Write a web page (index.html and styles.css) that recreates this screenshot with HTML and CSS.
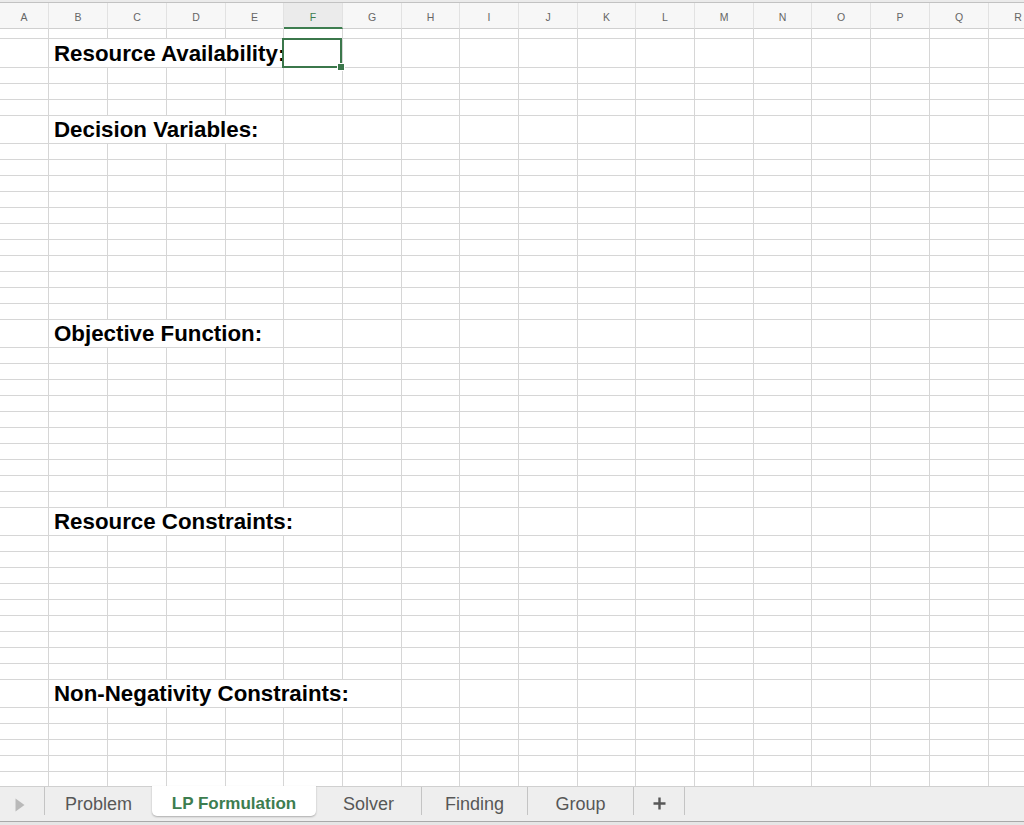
FILE: index.html
```html
<!DOCTYPE html>
<html lang="en">
<head>
<meta charset="utf-8">
<title>LP Formulation</title>
<link rel="stylesheet" href="styles.css">
</head>
<body>
<div class="app">
  <div class="topstrip"></div>
  <div class="row hdr">
    <span>A</span><span>B</span><span>C</span><span>D</span><span>E</span><span class="cur">F</span><span>G</span><span>H</span><span>I</span><span>J</span><span>K</span><span>L</span><span>M</span><span>N</span><span>O</span><span>P</span><span>Q</span><span>R</span>
  </div>
  <div class="sheet">
    <div class="row r1"><span></span><span></span><span></span><span></span><span></span><span></span><span></span><span></span><span></span><span></span><span></span><span></span><span></span><span></span><span></span><span></span><span></span><span></span></div>
    <div class="row big2"><span></span><span class="lbl s4">Resource Availability:</span><span class="selcell"><i class="sel"><i class="handle"></i></i></span><span></span><span></span><span></span><span></span><span></span><span></span><span></span><span></span><span></span><span></span><span></span><span></span></div>
    <div class="row"><span></span><span></span><span></span><span></span><span></span><span></span><span></span><span></span><span></span><span></span><span></span><span></span><span></span><span></span><span></span><span></span><span></span><span></span></div>
    <div class="row"><span></span><span></span><span></span><span></span><span></span><span></span><span></span><span></span><span></span><span></span><span></span><span></span><span></span><span></span><span></span><span></span><span></span><span></span></div>
    <div class="row"><span></span><span></span><span></span><span></span><span></span><span></span><span></span><span></span><span></span><span></span><span></span><span></span><span></span><span></span><span></span><span></span><span></span><span></span></div>
    <div class="row big"><span></span><span class="lbl s4">Decision Variables:</span><span></span><span></span><span></span><span></span><span></span><span></span><span></span><span></span><span></span><span></span><span></span><span></span><span></span></div>
    <div class="row"><span></span><span></span><span></span><span></span><span></span><span></span><span></span><span></span><span></span><span></span><span></span><span></span><span></span><span></span><span></span><span></span><span></span><span></span></div>
    <div class="row"><span></span><span></span><span></span><span></span><span></span><span></span><span></span><span></span><span></span><span></span><span></span><span></span><span></span><span></span><span></span><span></span><span></span><span></span></div>
    <div class="row"><span></span><span></span><span></span><span></span><span></span><span></span><span></span><span></span><span></span><span></span><span></span><span></span><span></span><span></span><span></span><span></span><span></span><span></span></div>
    <div class="row"><span></span><span></span><span></span><span></span><span></span><span></span><span></span><span></span><span></span><span></span><span></span><span></span><span></span><span></span><span></span><span></span><span></span><span></span></div>
    <div class="row"><span></span><span></span><span></span><span></span><span></span><span></span><span></span><span></span><span></span><span></span><span></span><span></span><span></span><span></span><span></span><span></span><span></span><span></span></div>
    <div class="row"><span></span><span></span><span></span><span></span><span></span><span></span><span></span><span></span><span></span><span></span><span></span><span></span><span></span><span></span><span></span><span></span><span></span><span></span></div>
    <div class="row"><span></span><span></span><span></span><span></span><span></span><span></span><span></span><span></span><span></span><span></span><span></span><span></span><span></span><span></span><span></span><span></span><span></span><span></span></div>
    <div class="row"><span></span><span></span><span></span><span></span><span></span><span></span><span></span><span></span><span></span><span></span><span></span><span></span><span></span><span></span><span></span><span></span><span></span><span></span></div>
    <div class="row"><span></span><span></span><span></span><span></span><span></span><span></span><span></span><span></span><span></span><span></span><span></span><span></span><span></span><span></span><span></span><span></span><span></span><span></span></div>
    <div class="row"><span></span><span></span><span></span><span></span><span></span><span></span><span></span><span></span><span></span><span></span><span></span><span></span><span></span><span></span><span></span><span></span><span></span><span></span></div>
    <div class="row"><span></span><span></span><span></span><span></span><span></span><span></span><span></span><span></span><span></span><span></span><span></span><span></span><span></span><span></span><span></span><span></span><span></span><span></span></div>
    <div class="row big"><span></span><span class="lbl s4">Objective Function:</span><span></span><span></span><span></span><span></span><span></span><span></span><span></span><span></span><span></span><span></span><span></span><span></span><span></span></div>
    <div class="row"><span></span><span></span><span></span><span></span><span></span><span></span><span></span><span></span><span></span><span></span><span></span><span></span><span></span><span></span><span></span><span></span><span></span><span></span></div>
    <div class="row"><span></span><span></span><span></span><span></span><span></span><span></span><span></span><span></span><span></span><span></span><span></span><span></span><span></span><span></span><span></span><span></span><span></span><span></span></div>
    <div class="row"><span></span><span></span><span></span><span></span><span></span><span></span><span></span><span></span><span></span><span></span><span></span><span></span><span></span><span></span><span></span><span></span><span></span><span></span></div>
    <div class="row"><span></span><span></span><span></span><span></span><span></span><span></span><span></span><span></span><span></span><span></span><span></span><span></span><span></span><span></span><span></span><span></span><span></span><span></span></div>
    <div class="row"><span></span><span></span><span></span><span></span><span></span><span></span><span></span><span></span><span></span><span></span><span></span><span></span><span></span><span></span><span></span><span></span><span></span><span></span></div>
    <div class="row"><span></span><span></span><span></span><span></span><span></span><span></span><span></span><span></span><span></span><span></span><span></span><span></span><span></span><span></span><span></span><span></span><span></span><span></span></div>
    <div class="row"><span></span><span></span><span></span><span></span><span></span><span></span><span></span><span></span><span></span><span></span><span></span><span></span><span></span><span></span><span></span><span></span><span></span><span></span></div>
    <div class="row"><span></span><span></span><span></span><span></span><span></span><span></span><span></span><span></span><span></span><span></span><span></span><span></span><span></span><span></span><span></span><span></span><span></span><span></span></div>
    <div class="row"><span></span><span></span><span></span><span></span><span></span><span></span><span></span><span></span><span></span><span></span><span></span><span></span><span></span><span></span><span></span><span></span><span></span><span></span></div>
    <div class="row"><span></span><span></span><span></span><span></span><span></span><span></span><span></span><span></span><span></span><span></span><span></span><span></span><span></span><span></span><span></span><span></span><span></span><span></span></div>
    <div class="row big"><span></span><span class="lbl s5">Resource Constraints:</span><span></span><span></span><span></span><span></span><span></span><span></span><span></span><span></span><span></span><span></span><span></span><span></span></div>
    <div class="row"><span></span><span></span><span></span><span></span><span></span><span></span><span></span><span></span><span></span><span></span><span></span><span></span><span></span><span></span><span></span><span></span><span></span><span></span></div>
    <div class="row"><span></span><span></span><span></span><span></span><span></span><span></span><span></span><span></span><span></span><span></span><span></span><span></span><span></span><span></span><span></span><span></span><span></span><span></span></div>
    <div class="row"><span></span><span></span><span></span><span></span><span></span><span></span><span></span><span></span><span></span><span></span><span></span><span></span><span></span><span></span><span></span><span></span><span></span><span></span></div>
    <div class="row"><span></span><span></span><span></span><span></span><span></span><span></span><span></span><span></span><span></span><span></span><span></span><span></span><span></span><span></span><span></span><span></span><span></span><span></span></div>
    <div class="row"><span></span><span></span><span></span><span></span><span></span><span></span><span></span><span></span><span></span><span></span><span></span><span></span><span></span><span></span><span></span><span></span><span></span><span></span></div>
    <div class="row"><span></span><span></span><span></span><span></span><span></span><span></span><span></span><span></span><span></span><span></span><span></span><span></span><span></span><span></span><span></span><span></span><span></span><span></span></div>
    <div class="row"><span></span><span></span><span></span><span></span><span></span><span></span><span></span><span></span><span></span><span></span><span></span><span></span><span></span><span></span><span></span><span></span><span></span><span></span></div>
    <div class="row"><span></span><span></span><span></span><span></span><span></span><span></span><span></span><span></span><span></span><span></span><span></span><span></span><span></span><span></span><span></span><span></span><span></span><span></span></div>
    <div class="row"><span></span><span></span><span></span><span></span><span></span><span></span><span></span><span></span><span></span><span></span><span></span><span></span><span></span><span></span><span></span><span></span><span></span><span></span></div>
    <div class="row big"><span></span><span class="lbl s6">Non-Negativity Constraints:</span><span></span><span></span><span></span><span></span><span></span><span></span><span></span><span></span><span></span><span></span><span></span></div>
    <div class="row"><span></span><span></span><span></span><span></span><span></span><span></span><span></span><span></span><span></span><span></span><span></span><span></span><span></span><span></span><span></span><span></span><span></span><span></span></div>
    <div class="row"><span></span><span></span><span></span><span></span><span></span><span></span><span></span><span></span><span></span><span></span><span></span><span></span><span></span><span></span><span></span><span></span><span></span><span></span></div>
    <div class="row"><span></span><span></span><span></span><span></span><span></span><span></span><span></span><span></span><span></span><span></span><span></span><span></span><span></span><span></span><span></span><span></span><span></span><span></span></div>
    <div class="row"><span></span><span></span><span></span><span></span><span></span><span></span><span></span><span></span><span></span><span></span><span></span><span></span><span></span><span></span><span></span><span></span><span></span><span></span></div>
    <div class="row"><span></span><span></span><span></span><span></span><span></span><span></span><span></span><span></span><span></span><span></span><span></span><span></span><span></span><span></span><span></span><span></span><span></span><span></span></div>
  </div>
  <div class="tabbar">
    <div class="nav">
      <svg width="10" height="14" viewBox="0 0 10 14"><polygon points="0.5,0.5 9.5,7 0.5,13.5" fill="#b9b9b9"/></svg>
    </div>
    <div class="tab w108 sep">Problem</div>
    <div class="tab active">LP Formulation</div>
    <div class="tab w105">Solver</div>
    <div class="tab w106 sep">Finding</div>
    <div class="tab w106 sep">Group</div>
    <div class="tab plus sep">
      <svg width="13" height="13" viewBox="0 0 13 13"><path d="M6.5 0.5V12.5M0.5 6.5H12.5" stroke="#585858" stroke-width="2.4" fill="none"/></svg>
    </div>
    <div class="tab endsep sep"></div>
  </div>
  <div class="bottomstrip"></div>
</div>
</body>
</html>
```

FILE: styles.css
```css
* { box-sizing: border-box; }

html, body {
  margin: 0;
  padding: 0;
  background: #ffffff;
}

body {
  font-family: "Liberation Sans", Arial, Helvetica, sans-serif;
  overflow: hidden;
}

.app {
  width: 1024px;
  height: 825px;
  display: flex;
  flex-direction: column;
  overflow: hidden;
}

.topstrip {
  height: 3px;
  flex: none;
  background: #ebebeb;
  border-bottom: 1px solid #c2c2c2;
}

.row {
  display: grid;
  grid-template-columns: 49px 59px 59px 59px 58px 59px 59px 58px 59px 59px 58px 59px 59px 58px 59px 59px 59px 59px;
  height: 16px;
  flex: none;
}

.row > span {
  display: block;
  border-right: 1px solid #d6d6d6;
  border-bottom: 1px solid #d6d6d6;
  min-width: 0;
}

.hdr {
  height: 26px;
  background: #f7f7f7;
}

.hdr > span {
  border-right-color: #e2e2e2;
  border-bottom-color: #d0d0d0;
  font-size: 10.5px;
  line-height: 15px;
  padding-top: 7px;
  text-align: center;
  color: #666666;
}

.hdr > span.cur {
  background: #ebebeb;
  color: #3d7d4f;
  border-bottom: 2px solid #3d7d4f;
}

.sheet {
  flex: 1 1 auto;
  min-height: 0;
  overflow: hidden;
  display: flex;
  flex-direction: column;
}

.r1 { height: 10px; }
.big { height: 28px; }
.big2 { height: 29px; }

.row > .lbl {
  display: flex;
  align-items: flex-end;
  padding-left: 5px;
  padding-bottom: 2px;
  font-weight: bold;
  font-size: 22.3px;
  line-height: 22px;
  color: #000;
  white-space: nowrap;
}

.s4 { grid-column: span 4; }
.s5 { grid-column: span 5; }
.s6 { grid-column: span 6; }

.selcell {
  position: relative;
}

.sel {
  position: absolute;
  left: -2px;
  top: -1px;
  width: 60px;
  height: 30px;
  border: 2px solid #3b774b;
  z-index: 2;
}

.handle {
  position: absolute;
  right: -5px;
  bottom: -5px;
  width: 8px;
  height: 8px;
  background: #3b774b;
  border: 1px solid #ffffff;
}

.tabbar {
  height: 36px;
  flex: none;
  display: flex;
  align-items: flex-start;
  background: #eeeeee;
  border-top: 1px solid #d0d0d0;
  border-bottom: 1px solid #a9a9a9;
}

.nav {
  width: 44px;
  height: 34px;
  display: flex;
  align-items: center;
  padding-left: 15px;
  padding-top: 1px;
}

.nav svg { display: block; }

.tab {
  height: 28px;
  padding-top: 7px;
  line-height: 20px;
  font-size: 18px;
  color: #575757;
  text-align: center;
  white-space: nowrap;
}

.sep { border-left: 1px solid #c4c4c4; }

.w108 { width: 108px; }
.w105 { width: 105px; }
.w106 { width: 106px; }

.tab.active {
  width: 164px;
  height: 30px;
  margin-top: -1px;
  padding-top: 8px;
  background: #ffffff;
  color: #3d7d4f;
  font-weight: bold;
  font-size: 17px;
  border-radius: 0 0 5px 5px;
  box-shadow: 0 1px 2px rgba(0, 0, 0, 0.28);
}

.tab.plus {
  width: 51px;
  padding-top: 10px;
  display: flex;
  justify-content: center;
  align-items: flex-start;
}

.tab.plus svg { display: block; }

.tab.endsep { width: 1px; }

.bottomstrip {
  height: 3px;
  flex: none;
  background: #e6e6e6;
}
```
